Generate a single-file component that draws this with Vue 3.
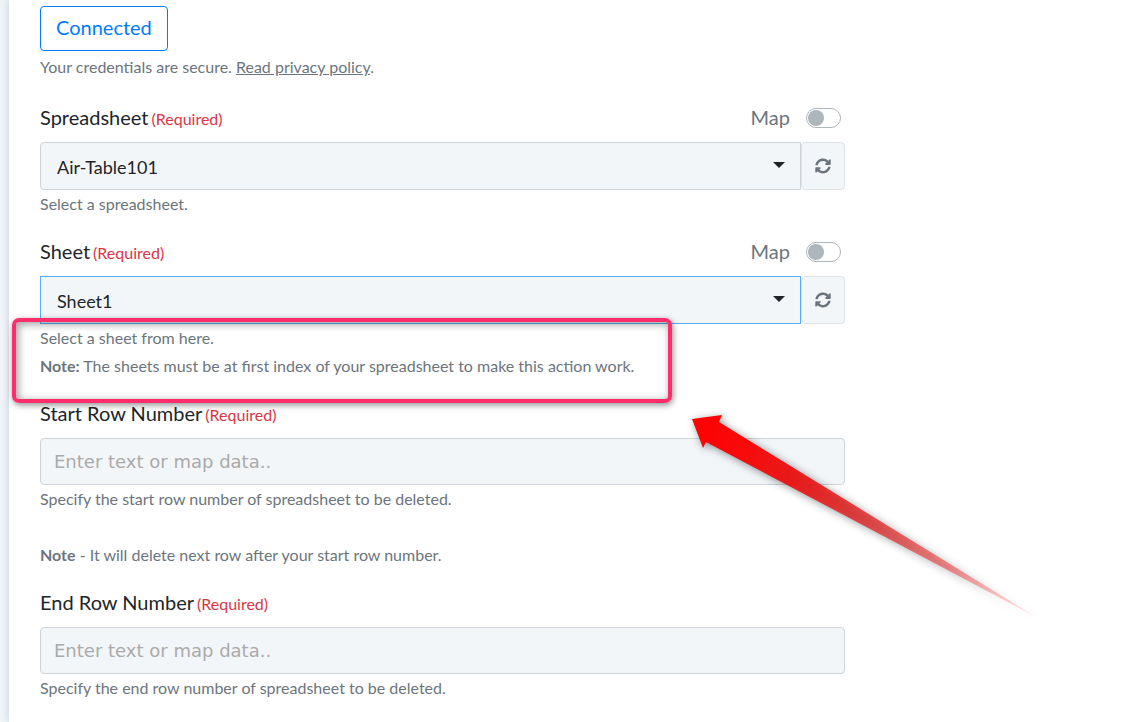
<script setup>
import { ref } from 'vue'

const spreadsheet = ref('Air-Table101')
const sheet = ref('Sheet1')
const mapSpreadsheet = ref(false)
const mapSheet = ref(false)
const startRow = ref('')
const endRow = ref('')
</script>

<template>
  <div class="page">
    <main class="panel">
      <form class="form" @submit.prevent>
        <div>
          <button type="button" class="connected">Connected</button>
          <p class="help first-help">Your credentials are secure. <a href="#">Read privacy policy</a>.</p>
        </div>

        <div class="field">
          <div class="label-row">
            <label for="spreadsheet">Spreadsheet</label><span class="required">(Required)</span>
            <label class="map">Map <input v-model="mapSpreadsheet" type="checkbox" class="switch" /></label>
          </div>
          <div class="select-row">
            <div class="select-wrap">
              <select id="spreadsheet" v-model="spreadsheet" class="control">
                <option>Air-Table101</option>
              </select>
              <svg class="caret" viewBox="0 0 12 6" width="12" height="6"><path d="M0 0h12L6 6z" fill="#212529" /></svg>
            </div>
            <button type="button" class="refresh" aria-label="Refresh spreadsheets">
              <svg viewBox="0 0 512 512" width="16" height="16"><path fill="#6c757d" d="M371 143c-31-31-72-48-116-48-77 0-144 53-163 127-1 6-6 10-12 10H24c-8 0-13-7-12-14C33 104 134 18 255 18c66 0 126 26 171 69l36-36c15-15 41-5 41 17v128c0 13-11 24-24 24H351c-21 0-32-26-17-41zM33 292h128c21 0 32 26 17 41l-37 37c31 31 72 48 116 48 76 0 142-52 162-127 1-6 6-10 12-10h56c8 0 14 7 12 14C468 410 367 494 256 494c-66 0-126-26-171-69l-36 36c-15 15-40 4-40-17V316c0-13 11-24 24-24z" /></svg>
            </button>
          </div>
          <p class="help">Select a spreadsheet.</p>
        </div>

        <div class="field">
          <div class="label-row">
            <label for="sheet">Sheet</label><span class="required">(Required)</span>
            <label class="map">Map <input v-model="mapSheet" type="checkbox" class="switch" /></label>
          </div>
          <div class="select-row">
            <div class="select-wrap">
              <select id="sheet" v-model="sheet" class="control active">
                <option>Sheet1</option>
              </select>
              <svg class="caret" viewBox="0 0 12 6" width="12" height="6"><path d="M0 0h12L6 6z" fill="#212529" /></svg>
            </div>
            <button type="button" class="refresh" aria-label="Refresh sheets">
              <svg viewBox="0 0 512 512" width="16" height="16"><path fill="#6c757d" d="M371 143c-31-31-72-48-116-48-77 0-144 53-163 127-1 6-6 10-12 10H24c-8 0-13-7-12-14C33 104 134 18 255 18c66 0 126 26 171 69l36-36c15-15 41-5 41 17v128c0 13-11 24-24 24H351c-21 0-32-26-17-41zM33 292h128c21 0 32 26 17 41l-37 37c31 31 72 48 116 48 76 0 142-52 162-127 1-6 6-10 12-10h56c8 0 14 7 12 14C468 410 367 494 256 494c-66 0-126-26-171-69l-36 36c-15 15-40 4-40-17V316c0-13 11-24 24-24z" /></svg>
            </button>
          </div>
          <div class="noted">
            <p class="help">Select a sheet from here.</p>
            <p class="help"><b>Note:</b> The sheets must be at first index of your spreadsheet to make this action work.</p>
            <div class="highlight"></div>
          </div>
        </div>

        <div class="field">
          <div class="label-row">
            <label for="start-row">Start Row Number</label><span class="required">(Required)</span>
          </div>
          <input id="start-row" v-model="startRow" type="text" class="control" placeholder="Enter text or map data.." />
          <p class="help">Specify the start row number of spreadsheet to be deleted.</p>
          <p class="help spaced"><b>Note</b> - It will delete next row after your start row number.</p>
        </div>

        <div class="field">
          <div class="label-row">
            <label for="end-row">End Row Number</label><span class="required">(Required)</span>
          </div>
          <input id="end-row" v-model="endRow" type="text" class="control" placeholder="Enter text or map data.." />
          <p class="help">Specify the end row number of spreadsheet to be deleted.</p>
        </div>
      </form>
    </main>

    <svg class="arrow" viewBox="680 400 370 230" width="370" height="230">
      <defs>
        <linearGradient id="arrow-fade" gradientUnits="userSpaceOnUse" x1="692" y1="419" x2="1038" y2="618">
          <stop offset="0" stop-color="#ff0000" />
          <stop offset="0.15" stop-color="#f90a0a" />
          <stop offset="0.3" stop-color="#ea1616" stop-opacity="0.96" />
          <stop offset="0.5" stop-color="#e02424" stop-opacity="0.8" />
          <stop offset="0.75" stop-color="#ea3636" stop-opacity="0.55" />
          <stop offset="1" stop-color="#ff4040" stop-opacity="0.08" />
        </linearGradient>
        <filter id="arrow-shadow" x="-10%" y="-10%" width="120%" height="120%" color-interpolation-filters="sRGB">
          <feDropShadow dx="2" dy="2" stdDeviation="4" flood-color="#000" flood-opacity="0.45" />
        </filter>
      </defs>
      <path d="M692 419l30-4-3 7 319 196-332-176-3 6z" fill="url(#arrow-fade)" filter="url(#arrow-shadow)" />
    </svg>
  </div>
</template>

<style>
body {
  margin: 0;
  background: #f3f6f9;
}
</style>

<style scoped>
.page {
  position: relative;
  min-height: 100vh;
  padding-left: 9px;
  overflow: hidden;
  box-sizing: border-box;
  background: #f1f5f9;
  font-family: Lato, "Liberation Sans", sans-serif;
  font-size: 20px;
  line-height: 28px;
  color: #212529;
}
.panel {
  box-sizing: border-box;
  min-height: 100vh;
  padding: 6px 31px 18px;
  background: #fff;
  box-shadow: 0 0 8px rgba(60, 80, 110, 0.25);
}
.form {
  display: flex;
  flex-direction: column;
  gap: 19px;
  max-width: 805px;
}
.connected {
  height: 45px;
  padding: 0 15px 3px;
  border: 1px solid #007bff;
  border-radius: 4px;
  background: #fff;
  color: #007bff;
  font: inherit;
}
.help {
  margin: 0;
  font-size: 16px;
  line-height: 28px;
  color: #6c757d;
}
.help a {
  color: inherit;
}
.first-help {
  margin: 2px 0 3px;
}
.spaced {
  margin-top: 28px;
}
.label-row {
  display: flex;
  align-items: baseline;
  height: 28px;
  margin-bottom: 11px;
}
.required {
  margin-left: 3px;
  font-size: 16px;
  color: #dc3545;
}
.map {
  display: flex;
  align-items: center;
  gap: 16px;
  margin-left: auto;
  margin-right: 4px;
  color: #6c757d;
}
.switch {
  appearance: none;
  display: flex;
  align-items: center;
  box-sizing: border-box;
  width: 35px;
  height: 20px;
  margin: 2px 0 0;
  padding: 1px;
  border: 1px solid #adb5bd;
  border-radius: 10px;
  background: #fff;
}
.switch::before {
  content: "";
  width: 16px;
  height: 16px;
  border-radius: 50%;
  background: #adb5bd;
}
.switch:checked {
  justify-content: flex-end;
}
.select-row {
  display: flex;
}
.select-wrap {
  position: relative;
  flex: 1;
}
.control {
  appearance: none;
  display: block;
  box-sizing: border-box;
  width: 100%;
  height: 47px;
  padding: 0 13px;
  border: 1px solid #ced4da;
  border-radius: 4px;
  background: #f3f6f9;
  color: #212529;
  font-family: "DejaVu Sans", sans-serif;
  font-size: 18px;
}
.control::placeholder {
  color: #aaa;
  opacity: 1;
}
select.control {
  height: 48px;
  padding: 2px 32px 0 16px;
  border-radius: 4px 0 0 4px;
  font-family: Lato, "Liberation Sans", sans-serif;
}
select.active {
  border-color: #57aef5;
  border-radius: 0;
}
.caret {
  position: absolute;
  top: 20px;
  right: 16px;
  pointer-events: none;
}
.refresh {
  display: flex;
  align-items: center;
  justify-content: center;
  width: 44px;
  padding: 0;
  border: 1px solid #dee2e6;
  border-radius: 4px;
  background: #f3f6f9;
}
.noted {
  position: relative;
}
.highlight {
  position: absolute;
  top: -6px;
  left: -28px;
  box-sizing: border-box;
  width: 660px;
  height: 85px;
  border: 4px solid #ff2d6b;
  border-radius: 7px;
  box-shadow: 1px 2px 6px rgba(0, 0, 0, 0.45), inset 2px 2px 8px rgba(0, 0, 0, 0.4);
  pointer-events: none;
}
.arrow {
  position: absolute;
  top: 400px;
  left: 680px;
  pointer-events: none;
}
</style>
